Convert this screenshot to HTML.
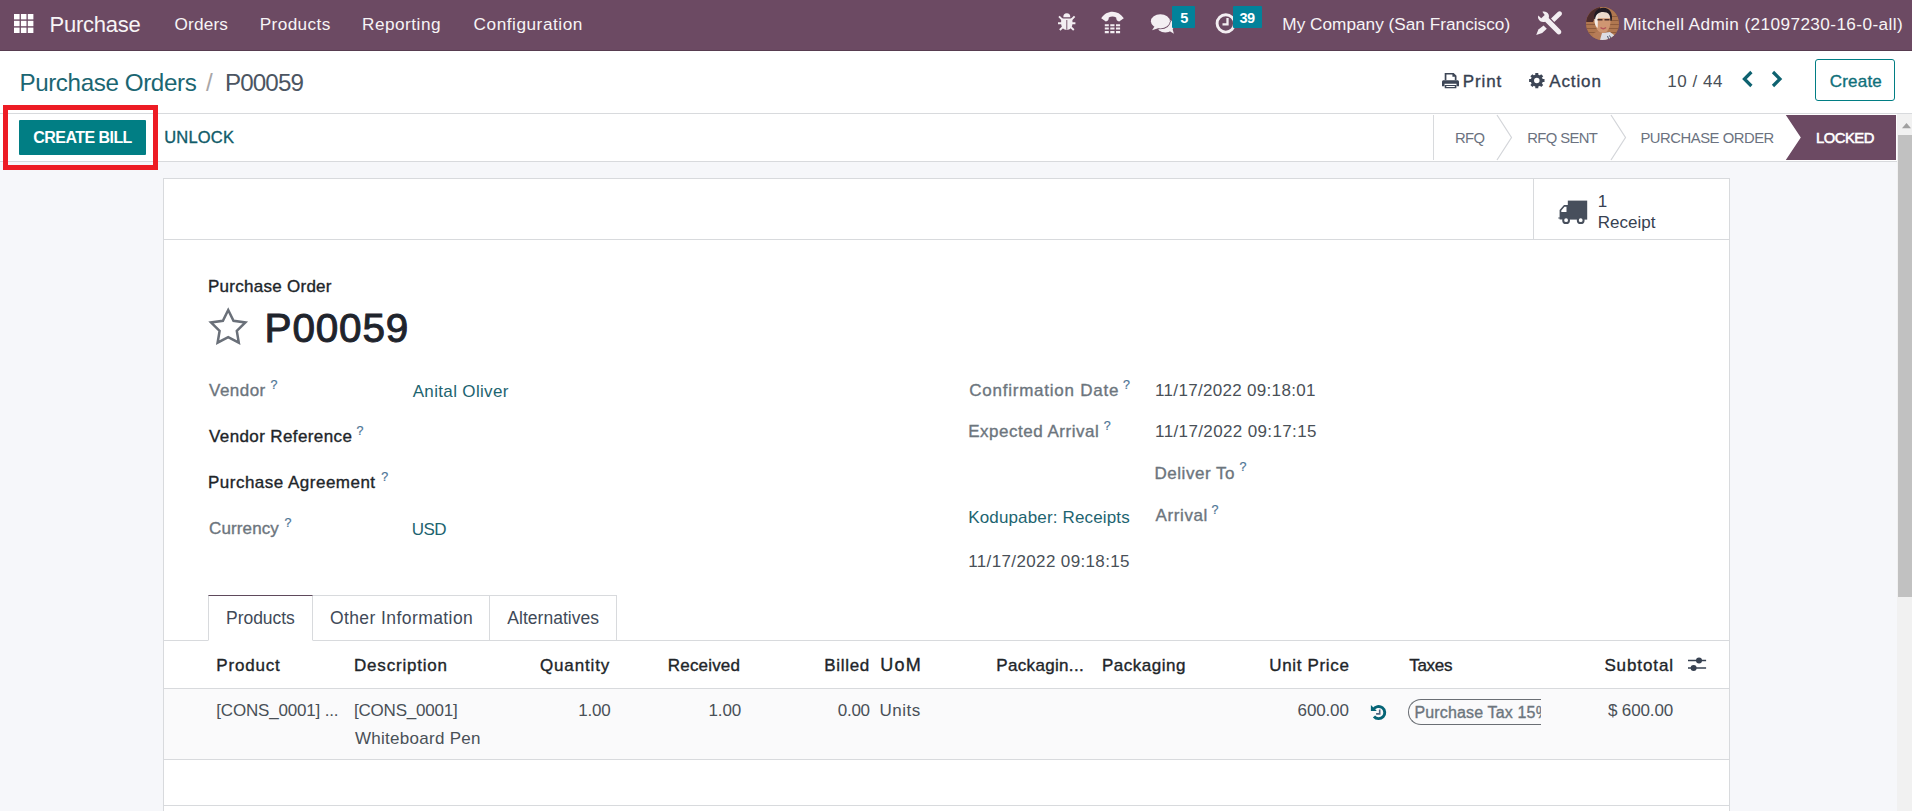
<!DOCTYPE html>
<html lang="en">
<head>
<meta charset="utf-8">
<title>Odoo - P00059</title>
<style>
*{box-sizing:border-box;margin:0;padding:0}
html,body{width:1912px;height:811px;overflow:hidden;background:#f6f7fa}
body{position:relative;font-family:"Liberation Sans",sans-serif;font-size:17px;color:#495057;-webkit-font-smoothing:antialiased}
ul,ol{list-style:none}
button{font:inherit;color:inherit;background:none;border:none;padding:0;text-align:left}
sup{vertical-align:baseline}
#h1{font-size:40.5px;font-weight:normal;color:#1f242c;-webkit-text-stroke:1px #1f242c}
.t{position:absolute;white-space:nowrap;line-height:1;display:block}
.m{-webkit-text-stroke:.35px currentColor}
svg{position:absolute;display:block;overflow:visible}

/* ---------- top navbar ---------- */
.navbar{position:absolute;left:0;top:0;width:1912px;height:51px;background:#6c4a63;border-bottom:1px solid #573c50;color:#fff}
.navbar .t{color:#f7f4f6}
.navbar .brand{font-size:22px;top:14px}
.navbar .menu{font-size:17.2px;top:17px}
.badge{position:absolute;top:6px;height:22px;background:#02829a;color:#fff;border-radius:1px}
.badge .t{font-size:14.5px;font-weight:bold;top:5px;color:#fff}
.avatar{position:absolute;left:1586px;top:7px;width:33px;height:33px;border-radius:50%;overflow:hidden;background:#8a5a44}

/* ---------- control panel ---------- */
.cp{position:absolute;left:0;top:51px;width:1912px;height:63px;background:#fff;border-bottom:1px solid #d8dadd}
.cp .bc{font-size:24.2px;top:21px}
.cp .act{font-size:17px;top:22px;color:#374151}
.btn-create{position:absolute;left:1815px;top:8px;width:80px;height:42px;border:1px solid #017e84;border-radius:3px;background:#fff;color:#0f6f7a}
.btn-create .t{font-size:17px;top:11px}

/* ---------- status bar ---------- */
.sb{position:absolute;left:0;top:114px;width:1897px;height:48px;background:#fff;border-bottom:1px solid #d8dadd}
.btn-primary{position:absolute;left:19px;top:6px;width:127px;height:35px;background:#017e84;color:#fff;border-radius:1px}
.btn-primary .t{font-size:16px;font-weight:bold;top:10px}
.sb .link{font-size:16.5px;top:16px;color:#0f5b69}
.sb .st{font-size:14.8px;top:18px;color:#6b7280}
.hl{position:absolute;left:3px;top:105px;width:155px;height:65px;border:5px solid #ed1c24}

/* ---------- sheet ---------- */
.sheet{position:absolute;left:163px;top:178px;width:1567px;height:700px;background:#fff;border:1px solid #d8dadd}
.bbox{position:absolute;left:0;top:0;width:1565px;height:61px;border-bottom:1px solid #d8dadd}
.stat{position:absolute;left:1369px;top:0;width:196px;height:60px;border-left:1px solid #d8dadd;color:#374151}
.lbl{font-size:17px;color:#6c757d}
.lbl.dk{color:#212529}
.val{font-size:17px;color:#495057}
.lnk{font-size:17px;color:#1d6470}
.q{font-size:12.5px;color:#4e7596;-webkit-text-stroke:.2px currentColor}
.tabs{position:absolute;left:0;top:416px;width:1565px;height:46px;border-bottom:1px solid #d8dadd;list-style:none}
.tabs li{position:absolute;top:0;height:46px;border:1px solid #d8dadd;border-left:none;background:#fff}
.tabs li.on{border-left:1px solid #d8dadd;border-top-color:#5f4a5c;border-bottom-color:#fff}
.tabs .t{font-size:17.5px;top:14px;color:#414a58}
table{position:absolute;left:0;top:462px;width:1565px;border-collapse:collapse;table-layout:fixed}
th,td{position:relative;font-weight:normal;text-align:left;vertical-align:top}
thead tr{height:47px}
tbody tr{height:71px;background:#fafafb}
thead tr{border-bottom:1px solid #d8dadd}
tbody tr{border-bottom:1px solid #d8dadd}
th .t{font-size:17px;top:16px;color:#212529}
td .t{font-size:17px;top:15px;color:#495057}
.tax{position:absolute;left:8px;top:10px;width:133px;height:26px;border:1px solid #6a6e74;border-right:none;border-radius:13px 0 0 13px;overflow:hidden}
.tax .t{font-size:16px;top:5px;left:7px;color:#6c757d}
.foot{position:absolute;left:0;top:626px;width:1565px;border-top:1px solid #d8dadd}

/* ---------- page scrollbar ---------- */
.scroll{position:absolute;left:1897px;top:114px;width:15px;height:697px;background:#f1f1f1}
.scroll i{position:absolute;left:1px;top:21px;width:14px;height:462px;background:#c1c1c1}
/* per-element metrics */
#ac{left:1549.2px;letter-spacing:0.88px;top:21.8px}
#b1{left:8.3px;top:4.9px}
#b2{left:6.4px;letter-spacing:-0.46px;top:4.9px}
#bc1{left:19.4px;letter-spacing:-0.39px;top:19.9px}
#bc2{left:206.0px;top:19.9px}
#bc3{left:225.0px;letter-spacing:-0.89px;top:19.9px}
#brand{left:49.5px;letter-spacing:-0.23px;top:13.6px}
#c1{left:52.3px;letter-spacing:-0.18px;top:13.6px}
#c11{left:47.9px;letter-spacing:-0.13px;top:13.6px}
#c2{left:8.0px;letter-spacing:-0.20px;top:13.6px}
#c2b{left:9.0px;letter-spacing:0.28px;top:41.0px}
#c3{left:78.2px;letter-spacing:-0.21px;top:13.6px}
#c4{left:88.4px;letter-spacing:-0.08px;top:13.6px}
#c5{left:87.8px;letter-spacing:-0.28px;top:13.6px}
#c6{left:4.5px;letter-spacing:0.52px;top:13.6px}
#c9{left:67.6px;letter-spacing:-0.15px;top:13.6px}
#cb{left:14.3px;letter-spacing:-0.55px;top:10.0px}
#co{left:1282.3px;letter-spacing:0.02px;top:16.0px}
#cr{left:13.8px;letter-spacing:0.19px;top:12.7px}
#h1{left:100.6px;letter-spacing:0.82px;top:129.1px}
#h_1{left:52.3px;letter-spacing:0.82px;top:15.7px}
#h_10{left:9.2px;letter-spacing:-0.28px;top:15.7px}
#h_11{left:44.4px;letter-spacing:0.89px;top:15.7px}
#h_2{left:8.0px;letter-spacing:0.80px;top:15.7px}
#h_3{left:39.9px;letter-spacing:0.87px;top:15.7px}
#h_4{left:47.8px;letter-spacing:0.18px;top:15.7px}
#h_5{left:74.3px;letter-spacing:0.68px;top:15.7px}
#h_6{left:5.3px;letter-spacing:1.25px;top:14.7px}
#h_7{left:11.3px;letter-spacing:0.33px;top:15.7px}
#h_8{left:7.9px;letter-spacing:0.53px;top:15.7px}
#h_9{left:39.3px;letter-spacing:0.65px;top:15.7px}
#l1{left:45.0px;letter-spacing:0.48px;top:202.9px}
#l2{left:45.0px;letter-spacing:0.39px;top:249.0px}
#l3{left:44.0px;letter-spacing:0.49px;top:294.6px}
#l4{left:45.0px;letter-spacing:0.13px;top:340.7px}
#l5{left:805.2px;letter-spacing:0.77px;top:203.0px}
#l6{left:804.2px;letter-spacing:0.51px;top:244.1px}
#l7{left:990.5px;letter-spacing:0.53px;top:285.5px}
#l8{left:991.5px;letter-spacing:0.62px;top:328.0px}
#m1{left:174.6px;letter-spacing:0.15px;top:16.0px}
#m2{left:259.7px;letter-spacing:0.40px;top:16.0px}
#m3{left:362.0px;letter-spacing:0.50px;top:16.0px}
#m4{left:473.6px;letter-spacing:0.54px;top:16.0px}
#pg{left:1667.2px;letter-spacing:0.56px;top:21.8px}
#pr{left:1462.8px;letter-spacing:0.87px;top:21.8px}
#r1{left:63.7px;top:13.8px}
#r2{left:63.7px;letter-spacing:0.03px;top:34.8px}
#s1{left:1455.0px;letter-spacing:-0.66px;top:17.3px}
#s2{left:1527.3px;letter-spacing:-0.62px;top:17.3px}
#s3{left:1640.4px;letter-spacing:-0.45px;top:17.3px}
#s4{left:1815.9px;letter-spacing:-0.47px;top:17.3px}
#t1{left:17.0px;letter-spacing:-0.03px;top:13.5px}
#t2{left:16.9px;letter-spacing:0.42px;top:13.5px}
#t3{left:17.3px;letter-spacing:0.03px;top:13.5px}
#ti{left:44.0px;letter-spacing:0.27px;top:99.4px}
#tx{left:5.5px;letter-spacing:0.15px;top:5.2px}
#ul{left:164.2px;letter-spacing:0.19px;top:15.2px}
#us{left:1622.9px;letter-spacing:0.40px;top:16.0px}
#v1{left:248.7px;letter-spacing:0.34px;top:203.9px}
#v4{left:247.7px;letter-spacing:-0.51px;top:341.7px}
#v5{left:991.1px;letter-spacing:0.31px;top:203.0px}
#v6{left:991.1px;letter-spacing:0.37px;top:244.0px}
#v7{left:804.2px;letter-spacing:0.15px;top:330.0px}
#v8{left:804.2px;letter-spacing:0.37px;top:373.5px}
#q1{left:106.6px;top:199.8px}
#q2{left:192.5px;top:245.9px}
#q3{left:217.3px;top:291.5px}
#q4{left:120.4px;top:337.6px}
#q5{left:959.1px;top:199.9px}
#q6{left:939.8px;top:241.0px}
#q7{left:1075.4px;top:282.4px}
#q8{left:1047.6px;top:324.9px}
</style>
</head>
<body>

<nav class="navbar">
  <a class="apps" title="Home Menu"><svg style="left:13.7px;top:14px" width="19.4" height="19" viewBox="0 0 19.4 19" fill="#fff"><rect x="0.0" y="0.0" width="5.6" height="5.4"/><rect x="6.9" y="0.0" width="5.6" height="5.4"/><rect x="13.8" y="0.0" width="5.6" height="5.4"/><rect x="0.0" y="6.8" width="5.6" height="5.4"/><rect x="6.9" y="6.8" width="5.6" height="5.4"/><rect x="13.8" y="6.8" width="5.6" height="5.4"/><rect x="0.0" y="13.6" width="5.6" height="5.4"/><rect x="6.9" y="13.6" width="5.6" height="5.4"/><rect x="13.8" y="13.6" width="5.6" height="5.4"/></svg></a>
  <a class="t brand" id="brand">Purchase</a>
  <ul class="menu-list">
    <li><a class="t menu" id="m1">Orders</a></li>
    <li><a class="t menu" id="m2">Products</a></li>
    <li><a class="t menu" id="m3">Reporting</a></li>
    <li><a class="t menu" id="m4">Configuration</a></li>
  </ul>
  <div class="systray">
    <svg style="left:0;top:0" width="1912" height="50" viewBox="0 0 1912 50" fill="#f3eef2" stroke="none">
    <!-- bug -->
    <g>
      <path d="M1063.300 17.300a3.500 4.100 0 0 1 7 0z"/>
      <path d="M1061.600 18.400h10.400c.5 1.600 .600 3.700 .4 5.900c-.4 3.300-2.300 5.600-5.600 5.600s-5.200-2.300-5.600-5.600c-.2-2.200-.1-4.300 .4-5.900z"/>
      <path d="M1059 16.400l3.600 3.600M1074.600 16.400l-3.600 3.600M1058 23.200h17.400M1059.800 30l3.400-3.200M1073.800 30l-3.400-3.200" stroke="#f3eef2" stroke-width="1.900" fill="none"/>
      <path d="M1066.800 20v9.800" stroke="#6c4a63" stroke-width=".9"/>
    </g>
    <!-- phone -->
    <g>
      <path d="M1101.2 18.2c5.5-8.6 17-8.6 22.6 0l-4.6 3.2c-2.2-.3-3-1.700-3-3.900c-2.300-1.200-5.100-1.200-7.400 0c0 2.200-.8 3.600-3 3.900z"/>
      <path d="M1104.8 24.200h4v2h-4zM1110.300 24.200h4.200v2h-4.200zM1116 24.200h4.100v2h-4.100zM1104.800 27.400h4v2h-4zM1110.300 27.400h4.200v2h-4.200zM1116 27.400h4.100v2h-4.100zM1104.800 31h4v2.200h-4zM1110.300 31h4.200v2.200h-4.200zM1116 31h4.100v2.200h-4.100z"/>
    </g>
    <!-- comments -->
    <g>
      <ellipse cx="1165.300" cy="25.600" rx="8.700" ry="6.900"/>
      <path d="M1169 30.800l4.900 3l-1.500-5.300z"/>
      <ellipse cx="1160.400" cy="21.300" rx="10.300" ry="7.900" fill="#6c4a63"/>
      <path d="M1155.400 26.200l-3.600 5.200l8.600-2.600z" fill="#6c4a63"/>
      <ellipse cx="1160.400" cy="21.300" rx="9.500" ry="7.100"/>
      <path d="M1154.800 26l-2.700 4.200l6.700-2.200z"/>
    </g>
    <!-- clock -->
    <g fill="none" stroke="#f3eef2">
      <circle cx="1225.800" cy="23.400" r="8.700" stroke-width="2.900"/>
      <path d="M1227.500 17.900v6.400h-5" stroke-width="2.300"/>
    </g>
    <!-- tools -->
    <g>
      <path d="M1538.300 15.400l2.900 2.900l3.500-3.400l-2.300-3.200c2.700-.6 5 .5 6.100 2.600c.6 1.300 .6 2.700 .2 3.800l11.800 11.900c1.100 1.100 1.100 2.700 .1 3.700c-1 1-2.600 1-3.700-.1l-11.800-11.900c-2.900 .9-5.800-.5-6.800-3c-.4-1.100-.4-2.200 0-3.300z"/>
      <path d="M1551 18.500l6.800-6.600c1.100-1 2.600-1 3.500 0c.9 1 .9 2.500-.2 3.500l-6.800 6.500z"/>
      <path d="M1543.600 25.600l3.200 3.200l-4.600 4.200l-6 2l2.200-5.600z"/>
    </g>
  </svg>
    <div class="badge" style="left:1172px;width:23px"><span class="t" id="b1">5</span></div>
    <div class="badge" style="left:1233px;width:29px"><span class="t" id="b2">39</span></div>
    <a class="t menu" id="co">My Company (San Francisco)</a>
    <div class="avatar"><svg style="left:0;top:0" width="33" height="33" viewBox="0 0 33 33">
      <rect width="33" height="33" fill="#b07750"/>
      <g>
        <path d="M0 9.500h33M0 13.500h33M0 17.500h33M0 21.500h33M0 25.500h33" stroke="#8f5c3d" stroke-width="1.100"/>
        <path d="M0 0h14v6l-5 3l-2 6h-7z" fill="#4b2b2c"/>
        <path d="M5 33l3-7l6-3l5 10z" fill="#b67c58"/>
        <path d="M14 33l2-7l8-1l4 3l-1 5z" fill="#dcdde3"/>
        <path d="M23.500 28.500l1.800 3.500M21.500 29l1.500 4" stroke="#39465e" stroke-width=".9"/>
        <path d="M8.500 14c-.5-7 3-10.500 8.500-10.500s8.500 4 7.500 11.500c-.5 6-3 11-7.500 11s-8-5-8.500-12z" fill="#cf9672"/>
        <path d="M12 5.500c2-1.500 9-1.800 12 1.500l.3 4.200h-12.800z" fill="#ead9cd"/>
        <path d="M8.500 13c0-3 1.500-5.500 3.500-7l-.3 15c-2-1.500-3.200-4-3.200-8z" fill="#f4ece6"/>
        <path d="M8.200 12c-.8-7 3.300-11.200 9.300-11.200c6 0 9.500 5 8.300 12.700l-1.400 .3c.2-4.500-1.200-7.300-3.900-8.300c-3-1-6.800-.6-8.800 1.200c-1.500 1.400-2.300 3-2.600 5.600z" fill="#211b24"/>
        <path d="M11.500 12.700h5M18.500 12.700h5" stroke="#4a2d28" stroke-width="1.500"/>
        <path d="M14.500 20.500c1.500 1.300 4 1.300 5.500 0" stroke="#b5545a" stroke-width="1.500" fill="none"/>
      </g>
    </svg></div>
    <a class="t menu" id="us">Mitchell Admin (21097230-16-0-all)</a>
  </div>
</nav>

<header class="cp">
  <ol class="breadcrumb">
    <li><a class="t bc" id="bc1" style="color:#1b6672">Purchase Orders</a></li>
    <li><span class="t bc" id="bc2" style="color:#a9a6a6">/</span><span class="t bc" id="bc3" style="color:#4c5562">P00059</span></li>
  </ol>
  <div class="cp-actions">
    <svg style="left:0;top:0" width="1912" height="62" viewBox="0 51 1912 62">
    <!-- print -->
    <g fill="#3d4656">
      <path d="M1444.700 73h9l2.800 2.800v4.500h-1.700v-3.600h-2.400v-2.100h-6v5.700h-1.700z"/>
      <path d="M1443.600 80.200h13.800c.9 0 1.600 .7 1.600 1.600v4.400h-2.500v-2.400h-12v2.400h-2.500v-4.400c0-.9 .7-1.600 1.600-1.600z"/>
      <path d="M1444.700 84.900h11.700v3.300h-11.700zm1.600 1.200v.9h8.500v-.9z" fill-rule="evenodd"/>
    </g>
    <!-- cog -->
    <g fill="none" stroke="#3d4656">
      <circle cx="1536.800" cy="80.600" r="4.400" stroke-width="3.300"/>
      <path d="M1542.0 80.6L1544.5 80.6M1540.5 84.3L1542.2 86.0M1536.8 85.8L1536.8 88.3M1533.1 84.3L1531.4 86.0M1531.6 80.6L1529.1 80.6M1533.1 76.9L1531.4 75.2M1536.8 75.4L1536.8 72.9M1540.5 76.9L1542.2 75.2" stroke-width="3"/>
    </g>
    <!-- pager chevrons -->
    <g fill="none" stroke="#0e6270" stroke-width="3.200">
      <path d="M1751.400 72l-7 7l7 7"/>
      <path d="M1773 72l7 7l-7 7"/>
    </g>
  </svg>
    <button class="t act m" id="pr">Print</button>
    <button class="t act m" id="ac">Action</button>
    <span class="t act" id="pg" style="color:#495057">10 / 44</span>
    <button class="btn-create"><span class="t m" id="cr">Create</span></button>
  </div>
</header>

<div class="sb">
  <button class="btn-primary"><span class="t" id="cb">CREATE BILL</span></button>
  <button class="t link m" id="ul">UNLOCK</button>
  <div class="status">
    <svg style="left:0;top:0" width="1897" height="47" viewBox="0 114 1897 47">
    <path d="M1433.500 115v45" stroke="#d8dadd" stroke-width="1" fill="none"/>
    <path d="M1497 115l14.500 22.500l-14.500 22.500M1611 115l14.500 22.500l-14.500 22.500" stroke="#d3d5d9" stroke-width="1.200" fill="none"/>
    <path d="M1785.800 115h110.200v45h-110.200l15-22.500z" fill="#6c4a63"/>
  </svg>
    <span class="t st" id="s1">RFQ</span>
    <span class="t st" id="s2">RFQ SENT</span>
    <span class="t st" id="s3">PURCHASE ORDER</span>
    <span class="t st" id="s4" style="color:#fff;-webkit-text-stroke:.55px #fff">LOCKED</span>
  </div>
</div>
<div class="hl"></div>

<main class="sheet">
  <div class="bbox">
    <button class="stat">
      <svg style="left:0;top:0" width="196" height="60" viewBox="1534 179 196 60" fill="#474f5c">
        <path d="M1567.800 200.600h19.400v19h-19.400z"/>
        <path d="M1559.600 210l4.400-5h4.200v14.600h-8.600v-1h-1.300v-1.200h1.300zm1.700 .5v1.500h5.200v-5.300h-2z" fill-rule="evenodd"/>
        <circle cx="1566.100" cy="220.200" r="2.900" fill="#fff" stroke="#474f5c" stroke-width="2"/>
        <circle cx="1580.700" cy="220.200" r="2.900" fill="#fff" stroke="#474f5c" stroke-width="2"/>
      </svg>
      <span class="t val" id="r1" style="color:#374151">1</span>
      <span class="t val" id="r2" style="color:#374151">Receipt</span>
    </button>
  </div>
  <div class="title">
    <span class="t lbl dk m" id="ti">Purchase Order</span>
    <svg style="left:43px;top:127px" width="42" height="40" viewBox="207 306 42 40">
    <path d="M228.2 310.0L233.5 320.8L245.4 322.5L236.8 330.9L238.8 342.7L228.2 337.1L217.6 342.7L219.6 330.9L211.0 322.5L222.9 320.8z" fill="none" stroke="#6a7079" stroke-width="2.500" stroke-linejoin="miter"/>
  </svg>
    <h1 class="t" id="h1">P00059</h1>
  </div>

  <div class="group">
    <div class="field"><label class="t lbl m" id="l1">Vendor</label><sup class="t q" id="q1">?</sup><a class="t lnk" id="v1">Anital Oliver</a></div>
    <div class="field"><label class="t lbl dk m" id="l2">Vendor Reference</label><sup class="t q" id="q2">?</sup></div>
    <div class="field"><label class="t lbl dk m" id="l3">Purchase Agreement</label><sup class="t q" id="q3">?</sup></div>
    <div class="field"><label class="t lbl m" id="l4">Currency</label><sup class="t q" id="q4">?</sup><a class="t lnk" id="v4">USD</a></div>
  </div>
  <div class="group">
    <div class="field"><label class="t lbl m" id="l5">Confirmation Date</label><sup class="t q" id="q5">?</sup><span class="t val" id="v5">11/17/2022 09:18:01</span></div>
    <div class="field"><label class="t lbl m" id="l6">Expected Arrival</label><sup class="t q" id="q6">?</sup><span class="t val" id="v6">11/17/2022 09:17:15</span></div>
    <div class="field"><label class="t lbl m" id="l7">Deliver To</label><sup class="t q" id="q7">?</sup><a class="t lnk" id="v7">Kodupaber: Receipts</a></div>
    <div class="field"><label class="t lbl m" id="l8">Arrival</label><sup class="t q" id="q8">?</sup><span class="t val" id="v8">11/17/2022 09:18:15</span></div>
  </div>

  <ul class="tabs">
    <li class="on" style="left:44px;width:105px"><a class="t" id="t1">Products</a></li>
    <li style="left:149px;width:177px"><a class="t" id="t2">Other Information</a></li>
    <li style="left:326px;width:127px"><a class="t" id="t3">Alternatives</a></li>
  </ul>

  <table>
    <colgroup><col style="width:182px"><col style="width:154px"><col style="width:120px"><col style="width:130px"><col style="width:125px"><col style="width:110px"><col style="width:109px"><col style="width:136px"><col style="width:130px"><col style="width:40px"><col style="width:160px"><col style="width:122px"><col style="width:47px"></colgroup>
    <thead><tr>
      <th><span class="t m" id="h_1">Product</span></th>
      <th><span class="t m" id="h_2">Description</span></th>
      <th><span class="t m" id="h_3">Quantity</span></th>
      <th><span class="t m" id="h_4">Received</span></th>
      <th><span class="t m" id="h_5">Billed</span></th>
      <th><span class="t m" id="h_6" style="font-size:18px">UoM</span></th>
      <th><span class="t m" id="h_7">Packagin...</span></th>
      <th><span class="t m" id="h_8">Packaging</span></th>
      <th><span class="t m" id="h_9">Unit Price</span></th>
      <th></th>
      <th><span class="t m" id="h_10">Taxes</span></th>
      <th><span class="t m" id="h_11">Subtotal</span></th>
      <th><svg style="left:6px;top:15px" width="19" height="16" viewBox="1688 656.500 19 16">
          <path d="M1688 661h18.100M1688 668.500h18.100" stroke="#374151" stroke-width="1.500"/>
          <circle cx="1699" cy="661" r="3" fill="#374151"/><circle cx="1693.600" cy="668.500" r="3" fill="#374151"/>
        </svg></th>
    </tr></thead>
    <tbody><tr>
      <td><span class="t" id="c1">[CONS_0001] ...</span></td>
      <td><span class="t" id="c2">[CONS_0001]</span><span class="t" id="c2b">Whiteboard Pen</span></td>
      <td><span class="t" id="c3">1.00</span></td>
      <td><span class="t" id="c4">1.00</span></td>
      <td><span class="t" id="c5">0.00</span></td>
      <td><span class="t" id="c6">Units</span></td>
      <td></td>
      <td></td>
      <td><span class="t" id="c9">600.00</span></td>
      <td><svg style="left:10px;top:15px" width="18" height="18" viewBox="1370 704 18 18">
          <path d="M1373.370 709.510A6.100 6.100 0 1 1 1373.980 716.480" fill="none" stroke="#056476" stroke-width="2.900"/>
          <path d="M1370.900 705v5.900h5.900z" fill="#056476"/>
          <path d="M1379.700 709.400v4.500h-3.600" fill="none" stroke="#4d6580" stroke-width="1.600"/>
        </svg></td>
      <td><div class="tax"><span class="t m" id="tx">Purchase Tax 15%</span></div></td>
      <td><span class="t" id="c11">$ 600.00</span></td>
      <td></td>
    </tr></tbody>
  </table>
  <div class="foot"></div>
</main>

<div class="scroll"><i></i><svg style="left:5px;top:8.800px" width="9" height="5.200" viewBox="0 0 9 5.200"><path d="M0 5.200l4.500-5.200l4.500 5.200z" fill="#a0a0a0"/></svg></div>
</body>
</html>
